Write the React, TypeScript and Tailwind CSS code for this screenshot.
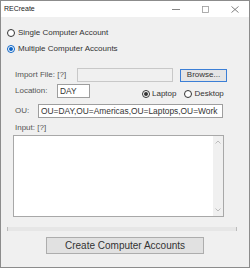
import React from "react";

function Radio({ checked, focus }: { checked?: boolean; focus?: boolean }) {
  return (
    <span
      className={
        "flex h-[8px] w-[8px] shrink-0 items-center justify-center rounded-full border bg-white " +
        (focus ? "border-[#0a62c4]" : "border-[#333333]")
      }
    >
      {checked && (
        <span
          className={
            "h-[4px] w-[4px] rounded-full " + (focus ? "bg-[#0a62c4]" : "bg-[#333333]")
          }
        />
      )}
    </span>
  );
}

function TitleBar() {
  return (
    <div className="flex h-[16px] items-center bg-white">
      <span className="ml-[3px] mt-[1px] text-[7px] text-[#222]">RECreate</span>
      <div className="ml-auto flex items-center">
        <svg width="8" height="8" viewBox="0 0 8 8" className="mr-[22px]">
          <line x1="0" y1="4.5" x2="8" y2="4.5" stroke="#666" strokeWidth="0.8" />
        </svg>
        <svg width="7" height="7" viewBox="0 0 7 7" className="mr-[22px]">
          <rect x="0.5" y="0.5" width="6" height="6" fill="none" stroke="#999" strokeWidth="0.8" />
        </svg>
        <svg width="8" height="7" viewBox="0 0 8 7" className="mr-[10px]">
          <path d="M0.5 0.5 L7.5 6.5 M7.5 0.5 L0.5 6.5" stroke="#666" strokeWidth="0.8" />
        </svg>
      </div>
    </div>
  );
}

export default function App() {
  return (
    <div
      className="flex h-[268px] w-[250px] flex-col border border-[#8c8c8c] bg-[#f0f0f0] text-[8px] text-[#333]"
      style={{ fontFamily: '"Liberation Sans", Arial, sans-serif' }}
    >
      <TitleBar />
      <div className="flex flex-col">
        <div className="mt-[11px] flex h-[10px] items-center pl-[6px]">
          <Radio />
          <span className="ml-[3px]">Single Computer Account</span>
        </div>
        <div className="mt-[6px] flex h-[10px] items-center pl-[6px]">
          <Radio checked focus />
          <span className="ml-[3px]">Multiple Computer Accounts</span>
        </div>

        <div className="mt-[14px] flex h-[14px] items-center pl-[14px]">
          <span className="w-[62px] text-[#555]">Import File: [?]</span>
          <div className="h-[14px] w-[96px] border border-[#c8c8c8] bg-[#f0f0f0]" />
          <button className="ml-[7px] flex h-[13px] w-[47px] items-center justify-center border border-[#3c7fd6] bg-[#e5e5e5] text-[8px] text-[#333]">
            Browse...
          </button>
        </div>

        <div className="mt-[2px] flex h-[14px] items-center pl-[14px]">
          <span className="w-[42px] text-[#555]">Location:</span>
          <div className="flex h-[14px] w-[33px] items-center border border-[#9e9e9e] bg-white pl-[2px] text-[8.4px]">
            DAY
          </div>
          <div className="ml-[52px] mt-[5px] flex items-center">
            <Radio checked />
            <span className="ml-[2px]">Laptop</span>
            <span className="ml-[8px]">
              <Radio />
            </span>
            <span className="ml-[2px]">Desktop</span>
          </div>
        </div>

        <div className="mt-[6px] flex h-[14px] items-center pl-[14px]">
          <span className="w-[23px] text-[#555]">OU:</span>
          <div className="flex h-[14px] w-[185px] items-center whitespace-nowrap border border-[#9e9e9e] bg-white pl-[2px] text-[8.4px]">
            OU=DAY,OU=Americas,OU=Laptops,OU=Work
          </div>
        </div>

        <div className="mt-[5px] flex h-[10px] items-center pl-[14px] text-[#555]">Input: [?]</div>

        <div className="ml-[12px] mt-[2px] flex h-[82px] w-[211px] border border-[#a8a8a8] bg-white">
          <div className="ml-auto flex h-full w-[10px] flex-col items-center justify-between bg-[#f0f0f0] py-[4px]">
            <svg width="6" height="4" viewBox="0 0 6 4">
              <path d="M0.5 3.5 L3 1 L5.5 3.5" fill="none" stroke="#b5b5b5" strokeWidth="0.9" />
            </svg>
            <svg width="6" height="4" viewBox="0 0 6 4">
              <path d="M0.5 0.5 L3 3 L5.5 0.5" fill="none" stroke="#b5b5b5" strokeWidth="0.9" />
            </svg>
          </div>
        </div>

        <div className="ml-[6px] mt-[10px] h-[4px] w-[230px] border-x border-[#bcbcbc] bg-[#e6e6e6]" />

        <button className="ml-[45px] mt-[6px] flex h-[17px] w-[158px] items-center justify-center border border-[#adadad] bg-[#e1e1e1] text-[10px] text-[#333]">
          Create Computer Accounts
        </button>
      </div>
    </div>
  );
}
